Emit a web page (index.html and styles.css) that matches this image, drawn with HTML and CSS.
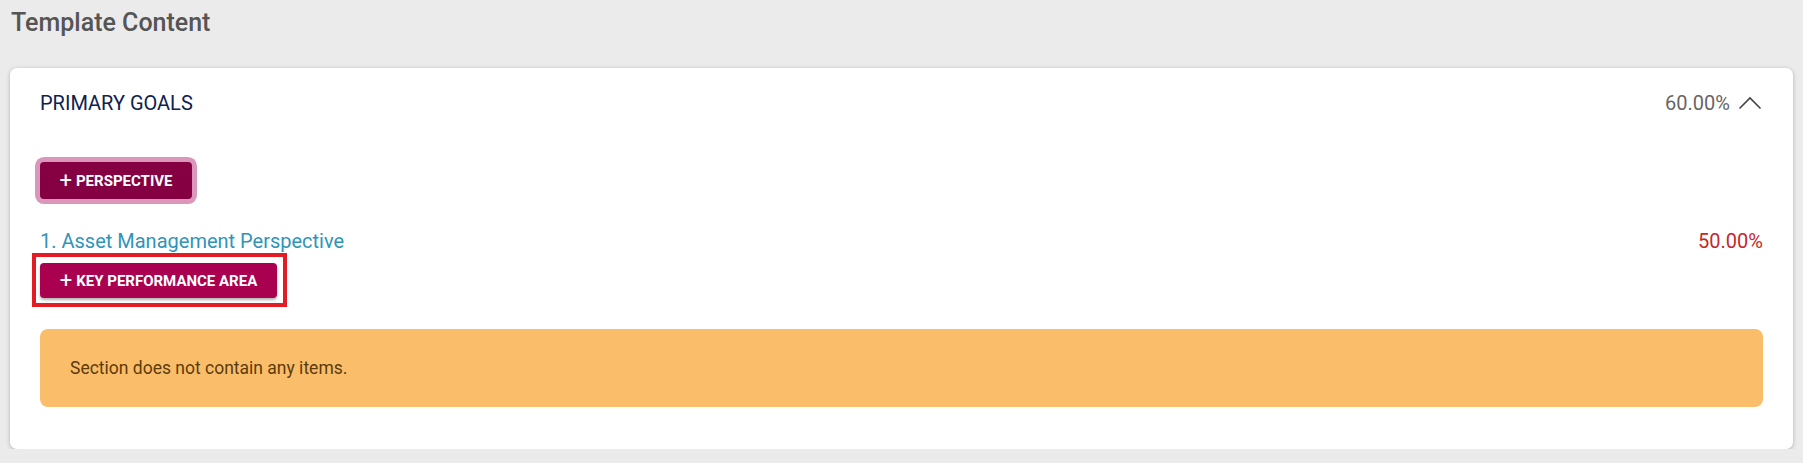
FILE: index.html
```html
<!DOCTYPE html>
<html lang="en">
<head>
  <meta charset="UTF-8">
  <meta name="viewport" content="width=device-width, initial-scale=1.0">
  <title>Template Content</title>
  <link rel="stylesheet" href="styles.css">
</head>
<body>
  <h2 class="page-title">Template Content</h2>
  <div class="card">
    <div class="section-head">
      <span class="section-name">PRIMARY GOALS</span>
      <div class="section-meta">
        <span class="section-weight">60.00%</span>
        <svg class="chevron" width="24" height="14" viewBox="0 0 24 14">
          <path d="M1.5 12.5 L12 2 L22.5 12.5" fill="none" stroke="#444" stroke-width="1.6"/>
        </svg>
      </div>
    </div>
    <div class="actions">
      <button class="btn btn-perspective"><span class="plus">+</span> PERSPECTIVE</button>
    </div>
    <div class="perspective">
      <div class="perspective-head">
        <a href="#" class="perspective-name">1. Asset Management Perspective</a>
        <span class="perspective-weight">50.00%</span>
      </div>
      <div class="highlight">
        <button class="btn btn-kpa"><span class="plus">+</span> KEY PERFORMANCE AREA</button>
      </div>
      <div class="alert">Section does not contain any items.</div>
    </div>
  </div>
</body>
</html>
```

FILE: styles.css
```css
body{
  margin: 0;
  background-color: #ebebeb;
  font-family: Roboto, "Liberation Sans", sans-serif;
}
.page-title{
  margin: 0;
  padding: 7px 11px 0;
  height: 68px;
  box-sizing: border-box;
  font-size: 25px;
  line-height: 32px;
  font-weight: 500;
  color: #555;
}
.card{
  margin: 0 10px;
  padding: 20px 30px 42px;
  background-color: #fff;
  border-radius: 7px;
  box-shadow: 0 1px 4px 0 rgba(0, 0, 0, .25);
}
.section-head{
  display: flex;
  align-items: center;
  justify-content: space-between;
  height: 30px;
}
.section-name{
  font-size: 20px;
  color: #0f2150;
}
.section-meta{
  display: flex;
  align-items: center;
  gap: 8px;
}
.section-weight{
  font-size: 20px;
  color: #666;
}
.chevron{
  margin-right: 1px;
}
.actions{
  margin-top: 44px;
}
.btn{
  border: none;
  color: #fff;
  font-family: Roboto, "Liberation Sans", sans-serif;
  font-weight: 700;
  font-size: 15px;
  border-radius: 4px;
  cursor: pointer;
  display: flex;
  align-items: center;
  justify-content: center;
  padding: 0;
  white-space: nowrap;
}
.btn .plus{
  font-weight: 400;
  font-size: 22px;
  margin-right: 4px;
  line-height: 1;
}
.btn-perspective{
  height: 37px;
  width: 152px;
  background-color: #850042;
  box-shadow: 0 0 0 5px #db97b9;
}
.perspective{
  margin-top: 30px;
}
.perspective-head{
  display: flex;
  justify-content: space-between;
  align-items: center;
  height: 24px;
}
.perspective-name{
  font-size: 20px;
  color: #2f95b8;
  text-decoration: none;
}
.perspective-weight{
  font-size: 20px;
  color: #c62828;
}
.highlight{
  display: inline-block;
  margin-left: -8px;
  padding: 6px 6px 5px 4px;
  border: 4px solid #e31c23;
}
.btn-kpa{
  height: 35px;
  width: 237px;
  background-color: #aa0050;
  box-shadow: 0 2px 3px 0 rgba(0, 0, 0, .3);
}
.alert{
  margin-top: 22px;
  height: 78px;
  padding: 0 30px;
  display: flex;
  align-items: center;
  border-radius: 8px;
  background-color: #fabe6b;
  color: #5c3b0b;
  font-size: 17.5px;
}
```
